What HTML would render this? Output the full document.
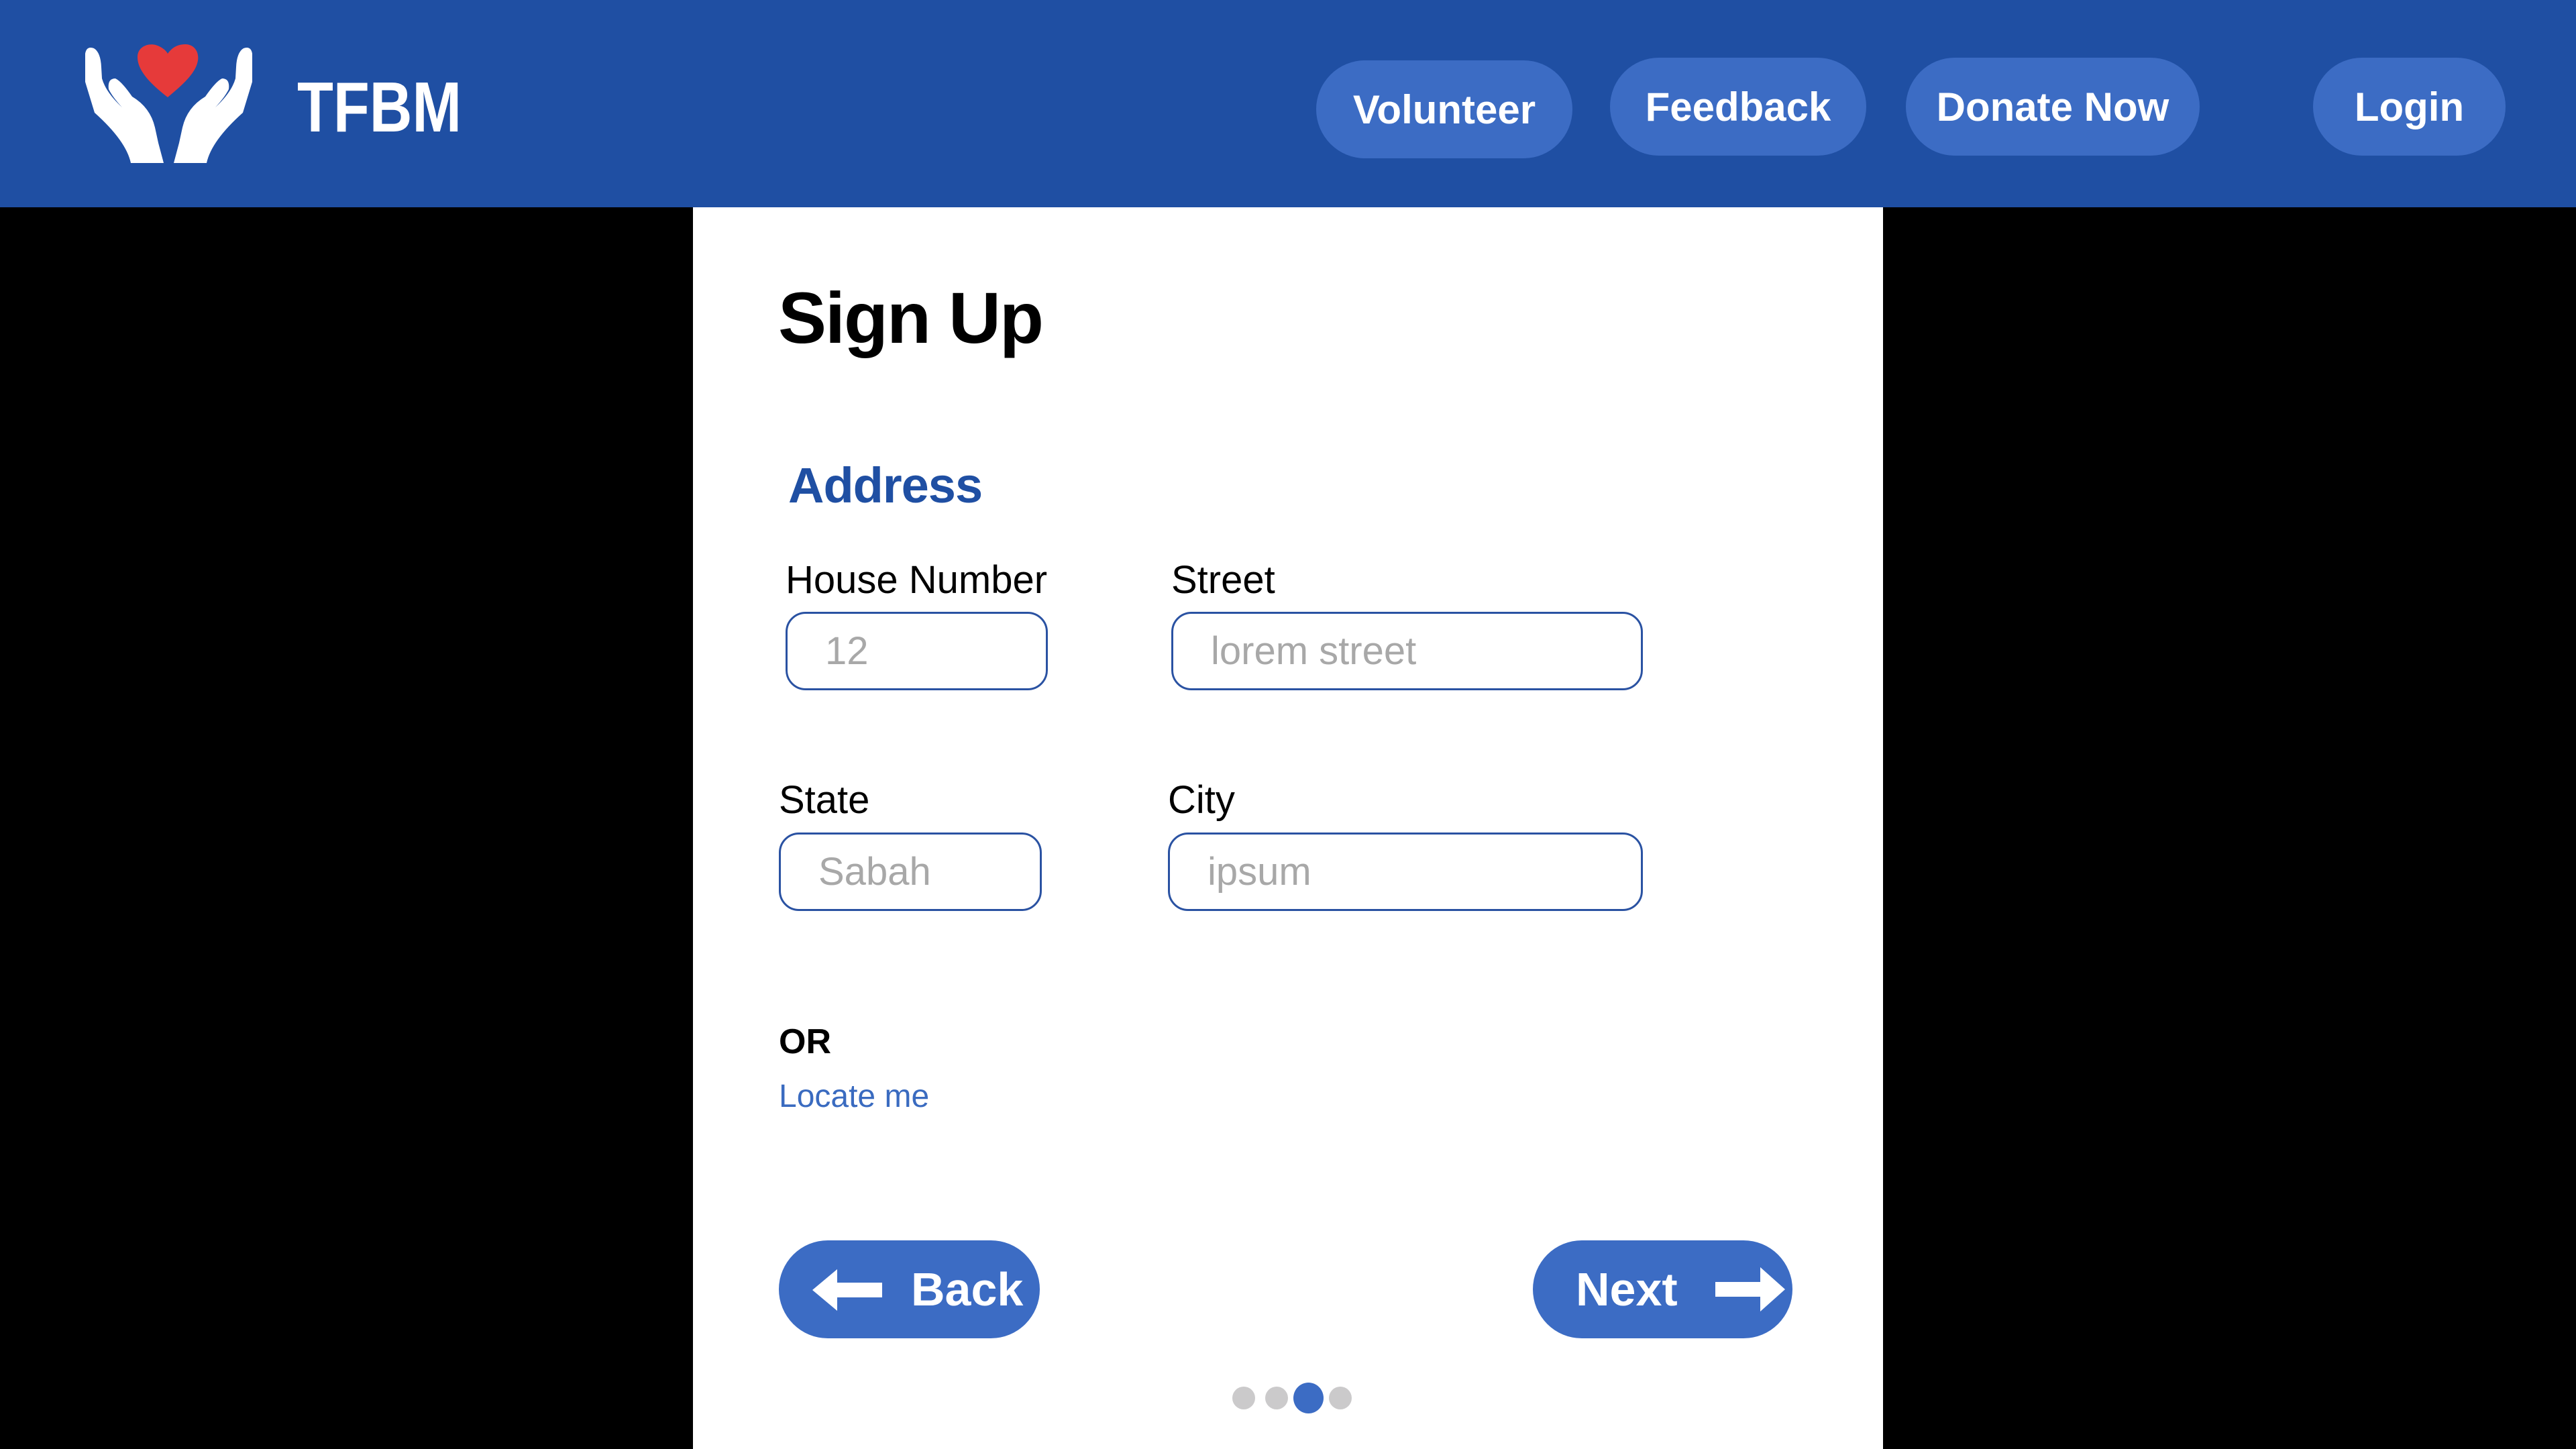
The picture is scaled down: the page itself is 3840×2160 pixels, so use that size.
<!DOCTYPE html>
<html><head><meta charset="utf-8"><style>
*{margin:0;padding:0;box-sizing:border-box}
body{width:3840px;height:2160px;background:#000;position:relative;overflow:hidden;font-family:"Liberation Sans",sans-serif}
.hdr{position:absolute;left:0;top:0;width:3840px;height:309px;background:#1f4fa3}
.nb{position:absolute;background:#3c6cc4;color:#fff;font-weight:bold;font-size:60px;border-radius:80px;display:flex;align-items:center;justify-content:center;height:146px}
.card{position:absolute;left:1033px;top:309px;width:1774px;height:1851px;background:#fff}
.t{position:absolute;white-space:nowrap;line-height:1}
.lbl{font-size:58px;color:#000}
.inp{position:absolute;border:3px solid #2a52a2;border-radius:30px;height:117px;font-size:58px;color:#a8a8a8;padding-left:56px;display:flex;align-items:center}
.btn{position:absolute;background:#3c6cc4;color:#fff;font-weight:bold;font-size:70px;border-radius:80px;height:146px;top:1849px;display:flex;align-items:center}
.dot{position:absolute;border-radius:50%;background:#cbcacb}
</style></head><body>
<div class="hdr"></div>
<svg style="position:absolute;left:0;top:0" width="800" height="309" viewBox="0 0 800 309">
<g fill="#fff">
<path d="M127,80 Q129,68 140,72 Q150,78 151,100 L152,117 Q158,138 182,160 Q168,145 162,133 Q160,117 172,117 Q181,121 197,144 Q224,160 231,190 L236,213 L244,243 L195,243 Q188,210 141,168 L127,122 Z"/>
<path d="M127,80 Q129,68 140,72 Q150,78 151,100 L152,117 Q158,138 182,160 Q168,145 162,133 Q160,117 172,117 Q181,121 197,144 Q224,160 231,190 L236,213 L244,243 L195,243 Q188,210 141,168 L127,122 Z" transform="translate(503,0) scale(-1,1)"/>
</g>
<path fill="#e63a3a" d="M250,145 C215,118 205,100 205,85 C205,70 220,64 232,67 C242,70 248,76 250,80 C254,74 262,66 276,66 C290,66 297,78 295,90 C292,110 270,128 250,145Z"/>
<text x="443" y="196" fill="#fff" font-family="Liberation Sans" font-weight="bold" font-size="106" textLength="245" lengthAdjust="spacingAndGlyphs">TFBM</text>
</svg>
<div class="nb" style="left:1962px;top:90px;width:382px">Volunteer</div>
<div class="nb" style="left:2400px;top:86px;width:382px">Feedback</div>
<div class="nb" style="left:2841px;top:86px;width:438px">Donate Now</div>
<div class="nb" style="left:3448px;top:86px;width:287px">Login</div>
<div class="card"></div>
<div class="t" style="left:1160px;top:420px;font-size:108px;font-weight:bold;letter-spacing:-2px">Sign Up</div>
<div class="t" style="left:1175px;top:687px;font-size:74px;font-weight:bold;color:#1f4fa3;letter-spacing:-1px">Address</div>
<div class="t lbl" style="left:1171px;top:836px">House Number</div>
<div class="t lbl" style="left:1746px;top:836px">Street</div>
<div class="inp" style="left:1171px;top:912px;width:391px">12</div>
<div class="inp" style="left:1746px;top:912px;width:703px">lorem street</div>
<div class="t lbl" style="left:1161px;top:1164px">State</div>
<div class="t lbl" style="left:1741px;top:1164px">City</div>
<div class="inp" style="left:1161px;top:1241px;width:392px">Sabah</div>
<div class="inp" style="left:1741px;top:1241px;width:708px">ipsum</div>
<div class="t" style="left:1161px;top:1527px;font-size:52px;font-weight:bold">OR</div>
<div class="t" style="left:1161px;top:1611px;font-size:48px;color:#3a6bc0">Locate me</div>
<div class="btn" style="left:1161px;width:389px">
<svg style="position:absolute;left:50px;top:43px" width="104" height="62" viewBox="0 0 104 62"><path fill="#fff" d="M0,31 L37,0 V20 H104 V42 H37 V62 Z"/></svg>
<span style="position:absolute;left:197px">Back</span></div>
<div class="btn" style="left:2285px;width:387px">
<span style="position:absolute;left:64px">Next</span>
<svg style="position:absolute;left:272px;top:40px" width="104" height="66" viewBox="0 0 104 66"><path fill="#fff" d="M104,33 L67,0 V22 H0 V44 H67 V66 Z"/></svg></div>
<div class="dot" style="left:1837px;top:2067px;width:34px;height:34px"></div>
<div class="dot" style="left:1886px;top:2067px;width:34px;height:34px"></div>
<div class="dot" style="left:1928px;top:2061px;width:45px;height:46px;background:#3c6cc4"></div>
<div class="dot" style="left:1981px;top:2067px;width:34px;height:34px"></div>
</body></html>
